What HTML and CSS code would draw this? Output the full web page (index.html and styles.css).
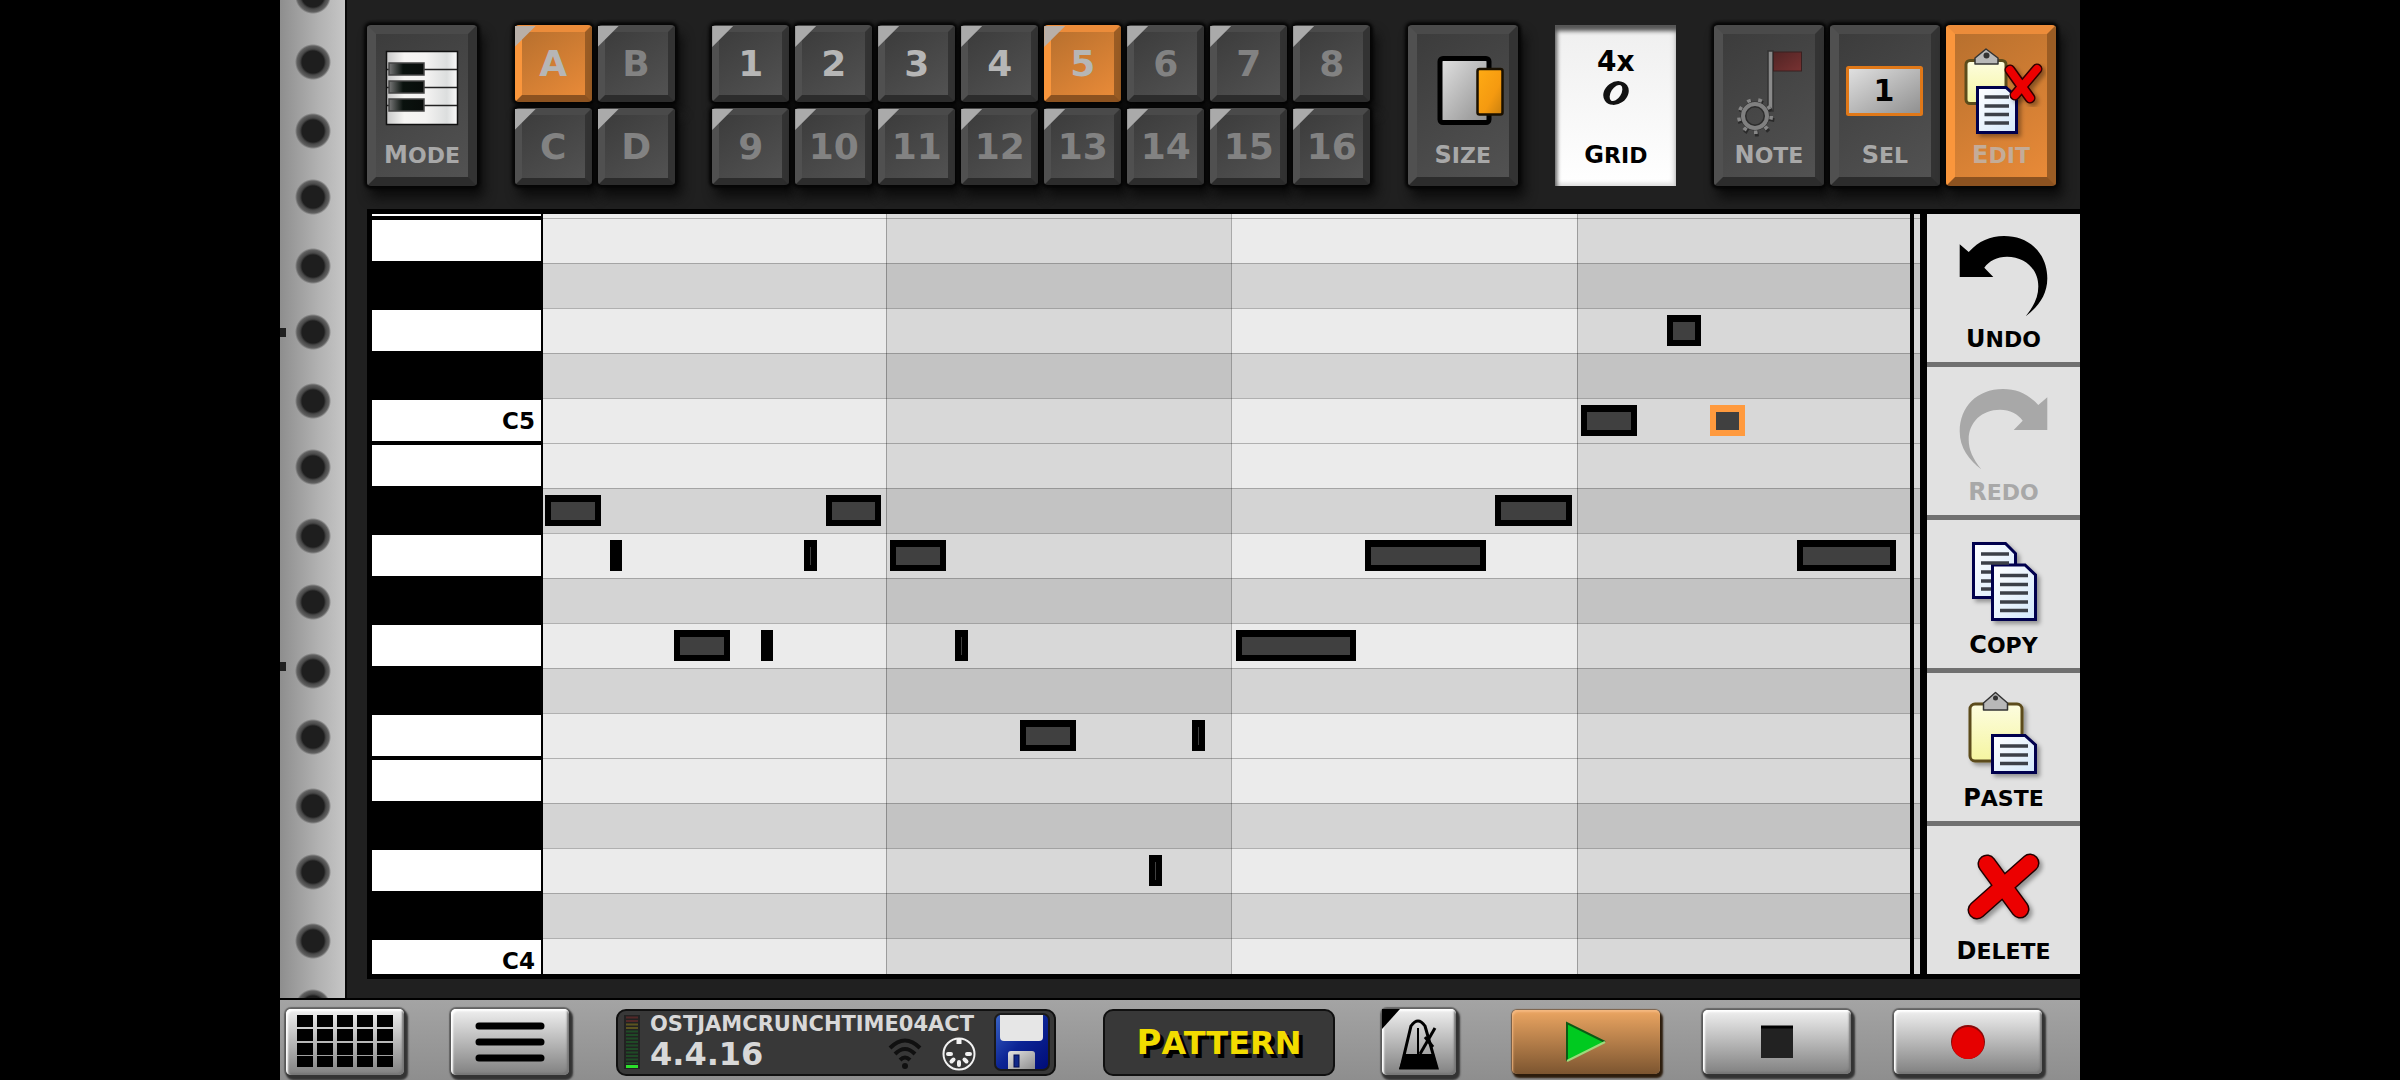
FILE: index.html
```html
<!DOCTYPE html>
<html lang="en">
<head>
<meta charset="utf-8">
<title>Pattern editor</title>
<link rel="stylesheet" href="styles.css">
</head>
<body>
<svg class="defs" aria-hidden="true">
  <defs>
    <linearGradient id="silver" x1="0" y1="0" x2="1" y2="1"><stop offset="0" stop-color="#e2e2e2"/><stop offset="1" stop-color="#8e8e8e"/></linearGradient>
    <linearGradient id="amber" x1="0" y1="0" x2="1" y2="1"><stop offset="0" stop-color="#ffab14"/><stop offset=".6" stop-color="#f59a10"/><stop offset="1" stop-color="#c87f0e"/></linearGradient>
    <linearGradient id="ivory" x1="0" y1="0" x2="1" y2="0"><stop offset="0" stop-color="#c8c8c8"/><stop offset=".25" stop-color="#f6f5f3"/><stop offset=".55" stop-color="#f4f3f2"/><stop offset=".85" stop-color="#dcdede"/><stop offset="1" stop-color="#fafafa"/></linearGradient>
    <linearGradient id="ebony" x1="0" y1="0" x2="1" y2="0"><stop offset="0" stop-color="#777"/><stop offset=".4" stop-color="#0a120e"/><stop offset="1" stop-color="#080c0a"/></linearGradient>
    <linearGradient id="paper" x1="0" y1="0" x2="1" y2="1"><stop offset="0" stop-color="#ffffff"/><stop offset="1" stop-color="#d4e8fb"/></linearGradient>
    <linearGradient id="board" x1="0" y1="0" x2="0" y2="1"><stop offset="0" stop-color="#fdfde0"/><stop offset="1" stop-color="#f5f5a0"/></linearGradient>
    <linearGradient id="blue" x1="0" y1="0" x2="1" y2="1"><stop offset="0" stop-color="#3b66c8"/><stop offset=".5" stop-color="#0c2494"/><stop offset="1" stop-color="#000c78"/></linearGradient>
    <linearGradient id="flag" x1="0" y1="0" x2="1" y2="1"><stop offset="0" stop-color="#502424"/><stop offset="1" stop-color="#783232"/></linearGradient>
    <filter id="drop" x="-20%" y="-20%" width="150%" height="150%"><feDropShadow dx="3" dy="3" stdDeviation="2" flood-opacity=".35"/></filter>
  </defs>
</svg>
<div class="app">
  <div class="upper">
    <div class="spine"></div>
    <div class="workspace">
      <header class="toolbar">
        <button class="tool" type="button">
          <svg viewBox="9 9 92 109" width="92" height="109"><rect x="19.500" y="26.500" width="71" height="73" fill="url(#ivory)" stroke="#111" stroke-width="1.500"/><path d="M20 44.500H90M20 62.500H90M20 80.500H90" stroke="#222" stroke-width="1.500"/><g fill="url(#ebony)" stroke="#444" stroke-width="1.500"><rect x="22" y="38" width="35" height="12"/><rect x="22" y="56" width="35" height="12"/><rect x="22" y="74" width="35" height="12"/></g></svg>
          <span class="cap">Mode</span>
        </button>
        <div class="pads banks">
          <button class="pad on" type="button">A</button><button class="pad" type="button">B</button>
          <button class="pad" type="button">C</button><button class="pad" type="button">D</button>
        </div>
        <div class="pads patterns">
          <button class="pad used" type="button">1</button><button class="pad used" type="button">2</button><button class="pad used" type="button">3</button><button class="pad used" type="button">4</button><button class="pad on" type="button">5</button><button class="pad" type="button">6</button><button class="pad" type="button">7</button><button class="pad" type="button">8</button>
          <button class="pad" type="button">9</button><button class="pad" type="button">10</button><button class="pad" type="button">11</button><button class="pad" type="button">12</button><button class="pad" type="button">13</button><button class="pad" type="button">14</button><button class="pad" type="button">15</button><button class="pad" type="button">16</button>
        </div>
        <button class="tool" type="button">
          <svg viewBox="9 9 92 109" width="92" height="109"><rect x="32" y="33.500" width="49" height="64" rx="3" fill="url(#silver)" stroke="#000" stroke-width="5"/><rect x="69.500" y="44" width="25" height="45.500" rx="2" fill="url(#amber)" stroke="#1a1000" stroke-width="2.500"/></svg>
          <span class="cap">Size</span>
        </button>
        <button class="tool grid-tool" type="button">
          <span class="grid-value">4x</span>
          <svg viewBox="0 0 32 28" width="32" height="28"><ellipse cx="16" cy="14" rx="13.500" ry="11" transform="rotate(-35 16 14)" fill="#111"/><ellipse cx="16" cy="14" rx="9" ry="5" transform="rotate(-58 16 14)" fill="#f6f6f6"/></svg>
          <span class="cap">Grid</span>
        </button>
        <div class="tool-group">
          <button class="tool" type="button">
            <svg viewBox="9 9 92 109" width="92" height="109"><rect x="54" y="26" width="5" height="60" fill="#8a8a8a" stroke="#333" stroke-width="1.500"/><rect x="59.500" y="27" width="28" height="19" fill="url(#flag)" stroke="#3a2020"/><circle cx="41" cy="91" r="15.500" fill="none" stroke="#2a2a2a" stroke-width="6" stroke-dasharray="3.500 7.320" transform="translate(1 2)"/><circle cx="41" cy="91" r="15.500" fill="none" stroke="#868686" stroke-width="5" stroke-dasharray="3.500 7.320"/><circle cx="41" cy="91" r="11.500" fill="none" stroke="#2c2c2c" stroke-width="6"/><circle cx="41" cy="91" r="12" fill="none" stroke="#808080" stroke-width="4"/></svg>
            <span class="cap">Note</span>
          </button>
          <button class="tool" type="button">
            <svg viewBox="9 9 92 109" width="92" height="109"><rect x="17.500" y="42.500" width="74" height="47" rx="1" fill="url(#silver)" stroke="#e07818" stroke-width="3"/><text class="sel-count" x="54" y="76" text-anchor="middle">1</text></svg>
            <span class="cap">Sel</span>
          </button>
          <button class="tool on" type="button">
            <svg viewBox="9 9 92 109" width="92" height="109"><rect x="20" y="35.500" width="40" height="43" rx="4" fill="url(#board)" stroke="#5c4c1c" stroke-width="3"/><path d="M29 39V33L40 24L52 33V39Z" fill="#b8b8b8" stroke="#333" stroke-width="1.500" stroke-linejoin="round"/><circle cx="40.500" cy="30.500" r="3" fill="#333"/><g filter="url(#drop)"><path d="M31.500 62.500H60L70.500 72V107.500H31.500Z" fill="url(#paper)" stroke="#00004e" stroke-width="3"/></g><path d="M38.500 72H63M38.500 81H63M38.500 89.500H63M38.500 98H63" stroke="#3c4048" stroke-width="3.500"/><g filter="url(#drop)" stroke-linecap="round"><path d="M64 45L84 73M91 44L69 70" stroke="#300" stroke-width="11"/><path d="M64 45L84 73M91 44L69 70" stroke="#ec0000" stroke-width="8"/></g></svg>
            <span class="cap">Edit</span>
          </button>
        </div>
      </header>
      <main class="editor">
        <div class="keys">
          <div class="key first"></div>
          <div class="key"></div><div class="key black"></div><div class="key"></div><div class="key black"></div><div class="key">C5</div>
          <div class="key"></div><div class="key black"></div><div class="key"></div><div class="key black"></div><div class="key"></div><div class="key black"></div><div class="key"></div>
          <div class="key"></div><div class="key black"></div><div class="key"></div><div class="key black"></div><div class="key">C4</div>
        </div>
        <div class="roll">
          <div class="lanes">
            <div class="lane first"></div>
            <div class="lane"></div><div class="lane dark"></div><div class="lane"></div><div class="lane dark"></div><div class="lane"></div>
            <div class="lane"></div><div class="lane dark"></div><div class="lane"></div><div class="lane dark"></div><div class="lane"></div><div class="lane dark"></div><div class="lane"></div>
            <div class="lane"></div><div class="lane dark"></div><div class="lane"></div><div class="lane dark"></div><div class="lane"></div>
          </div>
          <div class="measures"><i></i><i></i><i></i><i></i></div>
          <div class="note" style="--step:0;--len:3;--row:6"></div>
          <div class="note" style="--step:3;--len:1;--row:7"></div>
          <div class="note" style="--step:6;--len:3;--row:9"></div>
          <div class="note" style="--step:10;--len:1;--row:9"></div>
          <div class="note" style="--step:12;--len:1;--row:7"></div>
          <div class="note" style="--step:13;--len:3;--row:6"></div>
          <div class="note" style="--step:16;--len:3;--row:7"></div>
          <div class="note" style="--step:19;--len:1;--row:9"></div>
          <div class="note" style="--step:22;--len:3;--row:11"></div>
          <div class="note" style="--step:28;--len:1;--row:14"></div>
          <div class="note" style="--step:30;--len:1;--row:11"></div>
          <div class="note" style="--step:32;--len:6;--row:9"></div>
          <div class="note" style="--step:38;--len:6;--row:7"></div>
          <div class="note" style="--step:44;--len:4;--row:6"></div>
          <div class="note" style="--step:48;--len:3;--row:4"></div>
          <div class="note" style="--step:52;--len:2;--row:2"></div>
          <div class="note selected" style="--step:54;--len:2;--row:4"></div>
          <div class="note" style="--step:58;--len:5;--row:7"></div>
          <div class="end-bar"></div>
        </div>
        <aside class="actions">
          <button class="action" type="button">
            <svg viewBox="0 0 153 113" width="153" height="113"><path d="M32.700 30.300L41.700 38C52 27 63 22 77 22C103 22 120.300 40 120.300 64.500C120.300 81 111 93 98.700 102.300C107 92 111.300 83 111.300 72.500C111.300 55 98 42.700 80 42.700C70 42.700 62 47 57.300 53.700L66.300 63H32.700Z"/></svg>
            <span class="cap">Undo</span>
          </button>
          <button class="action" type="button" disabled>
            <svg viewBox="0 0 153 113" width="153" height="113"><path fill="#a8a8a8" transform="translate(153 0) scale(-1 1)" d="M32.700 30.300L41.700 38C52 27 63 22 77 22C103 22 120.300 40 120.300 64.500C120.300 81 111 93 98.700 102.300C107 92 111.300 83 111.300 72.500C111.300 55 98 42.700 80 42.700C70 42.700 62 47 57.300 53.700L66.300 63H32.700Z"/></svg>
            <span class="cap">Redo</span>
          </button>
          <button class="action" type="button">
            <svg viewBox="0 0 153 113" width="153" height="113"><g fill="url(#paper)" stroke="#00004e" stroke-width="3" filter="url(#drop)"><path d="M46.500 23.500H78.500L88.500 33.500V77.500H46.500Z"/><path d="M65.500 45H98L108.500 55V99.500H65.500Z"/></g><path d="M54 34H82M54 43H82M54 52H64M54 61H64M54 69H64M73 55.500H101M73 64.500H101M73 73H101M73 82H101M73 90.500H101" stroke="#3c4048" stroke-width="3.500"/></svg>
            <span class="cap">Copy</span>
          </button>
          <button class="action" type="button">
            <svg viewBox="0 0 153 113" width="153" height="113"><rect x="43" y="31" width="52" height="57" rx="5" fill="url(#board)" stroke="#5c4c1c" stroke-width="3" filter="url(#drop)"/><path d="M56.500 37V30L68.500 19.500L80.500 30V37Z" fill="#b8b8b8" stroke="#333" stroke-width="1.500" stroke-linejoin="round"/><circle cx="68.500" cy="25" r="2.500" fill="#333"/><path d="M65.500 62.500H98L108.500 72V99.500H65.500Z" fill="url(#paper)" stroke="#00004e" stroke-width="3" filter="url(#drop)"/><path d="M73 73H101M73 82H101M73 90.500H101" stroke="#3c4048" stroke-width="3.500"/></svg>
            <span class="cap">Paste</span>
          </button>
          <button class="action" type="button">
            <svg viewBox="0 0 153 113" width="153" height="113"><g stroke-linecap="round" filter="url(#drop)"><path d="M60 38L93 83M103 37L50 84" stroke="#200" stroke-width="19"/><path d="M60 38L93 83M103 37L50 84" stroke="#ec0000" stroke-width="16"/></g></svg>
            <span class="cap">Delete</span>
          </button>
        </aside>
      </main>
    </div>
  </div>
  <footer class="transport">
    <button class="chrome" type="button" aria-label="Grid view">
      <svg viewBox="0 0 96 60" width="96" height="60"><path d="M0 0H16V12H0ZM20 0H36V12H20ZM40 0H56V12H40ZM60 0H76V12H60ZM80 0H96V12H80ZM0 14H16V26H0ZM20 14H36V26H20ZM40 14H56V26H40ZM60 14H76V26H60ZM80 14H96V26H80ZM0 28H16V40H0ZM20 28H36V40H20ZM40 28H56V40H40ZM60 28H76V40H60ZM80 28H96V40H80ZM0 41H16V52H0ZM20 41H36V52H20ZM40 41H56V52H40ZM60 41H76V52H60ZM80 41H96V52H80Z" transform="translate(0 3)"/></svg>
    </button>
    <button class="chrome" type="button" aria-label="Menu">
      <svg viewBox="0 0 70 44" width="70" height="44"><path d="M4 6H66M4 22H66M4 38H66" stroke="#000" stroke-width="7" stroke-linecap="round"/></svg>
    </button>
    <div class="display">
      <svg viewBox="0 0 16 54" width="16" height="54"><rect width="16" height="54" fill="#222"/><path d="M2 2.500H14M2 6H14" stroke="#532828" stroke-width="2"/><path d="M2 9.500H14M2 13H14" stroke="#5c5420" stroke-width="2"/><path d="M2 16.500H14M2 20H14M2 23.500H14M2 27H14M2 30.500H14M2 34H14M2 37.500H14M2 41H14M2 44.500H14M2 48H14" stroke="#1f4a26" stroke-width="2"/><path d="M2 51.500H14" stroke="#2ce02c" stroke-width="3"/></svg>
      <div class="song">
        <div class="song-name">OSTJamCrunchtime04Act</div>
        <div class="song-row">
          <span class="position">4.4.16</span>
          <svg viewBox="0 0 34 34" width="34" height="34" fill="none" stroke="#101010" stroke-width="4"><path d="M2 11Q17 -4 32 11M7 17Q17 7 27 17M12 23Q17 18 22 23"/><circle cx="17" cy="29" r="3" fill="#101010" stroke="none"/></svg>
          <svg viewBox="0 0 34 34" width="34" height="34"><circle cx="17" cy="17" r="15.500" fill="none" stroke="#f2f2f2" stroke-width="2"/><path d="M17 2V7" stroke="#f2f2f2" stroke-width="5"/><g stroke="#f2f2f2" stroke-width="4" stroke-linecap="round"><path d="M6 17H9M25 17H28M9.500 24.500L11.500 22.500M24.500 24.500L22.500 22.500M17 25V28"/></g></svg>
        </div>
      </div>
      <button class="save" type="button" aria-label="Save">
        <svg viewBox="0 0 56 58" width="56" height="58"><rect x="1" y="1" width="54" height="56" rx="6" fill="url(#blue)" stroke="#1a1a1a" stroke-width="2"/><path d="M6 2H49V24Q49 28 45 28H10Q6 28 6 24Z" fill="#e6e6e6"/><path d="M14 56V41Q14 38 17 38H38Q41 38 41 41V56Z" fill="url(#silver)"/><rect x="20" y="42" width="5" height="12" fill="#102888" stroke="#000a50"/></svg>
      </button>
    </div>
    <button class="mode-name" type="button"><span class="mode-text">Pattern</span></button>
    <button class="chrome metronome" type="button" aria-label="Metronome">
      <svg viewBox="0 0 44 60" width="44" height="60" fill="none" stroke="#000" stroke-width="3"><path d="M4 56L14 14Q21 4 28 14L40 56Z"/><path d="M7 42H37L41 57H2Z" fill="#000" stroke="none"/><path d="M21 16V42" stroke-width="2"/><path d="M23 42L38 16"/><path d="M28 25L36 35"/></svg>
    </button>
    <div class="transport-keys">
      <button class="chrome wide play" type="button" aria-label="Play">
        <svg viewBox="0 0 44 42" width="44" height="42"><path d="M3 2L41 21L3 40Z" fill="#00ca20"/><path d="M3 40V2L41 21" fill="none" stroke="#0a5a14" stroke-width="2"/><path d="M3 40L41 21" stroke="#9ed87c" stroke-width="2"/></svg>
      </button>
      <button class="chrome wide" type="button" aria-label="Stop">
        <svg viewBox="0 0 34 34" width="34" height="34"><rect x="1" y="1" width="32" height="32" fill="#222"/><path d="M1 2H33" stroke="#000" stroke-width="3"/></svg>
      </button>
      <button class="chrome wide" type="button" aria-label="Record">
        <svg viewBox="0 0 36 36" width="36" height="36"><circle cx="18" cy="18" r="17" fill="#8c0808"/><circle cx="18" cy="19" r="16" fill="#e60000"/></svg>
      </button>
    </div>
  </footer>
</div>
</body>
</html>
```
FILE: styles.css
```css
* { box-sizing: border-box; }
body {
  margin: 0;
  background: #000;
  color: #000;
  font-family: "DejaVu Sans", "Liberation Sans", sans-serif;
  font-weight: 700;
}
button {
  margin: 0;
  padding: 0;
  border: 0;
  background: none;
  color: inherit;
  font: inherit;
}
svg { display: block; flex: none; }
.defs { position: absolute; width: 0; height: 0; }

.app {
  display: flex;
  flex-direction: column;
  min-height: 100vh;
  margin: 0 320px 0 280px;
  background: #202020;
}
.upper { display: flex; flex: 1; }
.spine {
  flex: none;
  width: 67px;
  border-right: 2px solid #080808;
  background:
    linear-gradient(#202020, #202020) 0 328px / 6px 9px no-repeat,
    linear-gradient(#202020, #202020) 0 662px / 6px 9px no-repeat,
    radial-gradient(circle at 33px 32px, #1e1e1e 11px, #484848 13px, #606060 16px, transparent 18px) 0 30px / 65px 135px repeat-y,
    radial-gradient(circle at 33px 101px, #1e1e1e 11px, #484848 13px, #606060 16px, transparent 18px) 0 30px / 65px 135px repeat-y,
    linear-gradient(90deg, #8e8e8e, #b2b2b2 60%, #c6c6c6);
}
.workspace { display: flex; flex: 1; flex-direction: column; min-width: 0; padding-bottom: 19px; }

/* Toolbar */
.toolbar {
  display: flex;
  justify-content: space-between;
  align-items: flex-start;
  height: 209px;
  padding: 25px 24px 0 20px;
}
.tool, .pad {
  position: relative;
  border: 9px solid;
  border-color: #4a4a4a #333 #2c2c2c #505050;
  border-radius: 4px;
  background: linear-gradient(145deg, #3c3c3c, #525252) padding-box, #3c3c3c;
  box-shadow: 0 0 3px 3px #060606, 5px 10px 12px 2px #0c0c0c;
}
.tool {
  display: flex;
  flex-direction: column;
  align-items: center;
  width: 110px;
  height: 161px;
  color: #a8a8a8;
}
.tool-group { display: flex; gap: 6px; }
.tool.on, .pad.on {
  border-color: #ec8c3a #9a5c24 #8c5220 #fa963c;
  background: linear-gradient(145deg, #b8702e, #e88a38) padding-box, #c87830;
}
.tool.on { color: #c4ac98; }
.tool.grid-tool {
  width: 121px;
  padding-top: 20px;
  border: 0;
  border-radius: 0;
  background: linear-gradient(#efefef, #fff);
  box-shadow: inset 2px 6px 4px #555, inset -3px -3px 4px #ddd;
  color: #000;
}
.grid-value { font-size: 28px; line-height: 34px; }
.grid-tool svg { margin-bottom: 36px; }
.cap {
  display: block;
  font-size: 22px;
  line-height: 24px;
  text-transform: uppercase;
}
.cap::first-letter { font-size: 24px; }
.sel-count { font-size: 30px; }

.pads { display: grid; gap: 6px; }
.banks { grid-template-columns: repeat(2, 77px); }
.patterns { grid-template-columns: repeat(8, 77px); }
.pad {
  height: 77px;
  border-width: 7px;
  color: #828282;
  font-size: 36px;
  line-height: 60px;
}
.pad.used, .pad.on { color: #b6b6b6; }
.pad::before {
  content: "";
  position: absolute;
  top: -6px;
  left: -7px;
  width: 21px;
  height: 21px;
  background: #aaa;
  clip-path: polygon(0 0, 100% 0, 0 100%);
}
.pad.on::before { background: #b8afa8; }

/* Piano roll */
.editor {
  display: flex;
  flex: 1;
  margin-left: 20px;
  border: solid #000;
  border-width: 5px 0 5px 5px;
  background: #000;
}
.keys { flex: none; width: 171px; height: 760px; overflow: hidden; padding-right: 2px; }
.key {
  height: 45px;
  padding-right: 6px;
  border: solid #000;
  border-width: 2px 0;
  background: #fff;
  font-size: 23px;
  line-height: 43px;
  text-align: right;
}
.key.first { height: 4px; border-top: 0; }
.key.black { background: #000; }
.roll { position: relative; flex: 1; height: 760px; overflow: hidden; }
.lane { height: 45px; border-top: 1px solid #b0b0b0; background: #ebebeb; }
.lane.first { height: 4px; border: 0; }
.lane.dark { border-color: #a4a4a4; background: #d4d4d4; }
.measures {
  position: absolute;
  inset: 0;
  display: grid;
  grid-template-columns: 343fr 345fr 346fr 343fr;
}
.measures i { border-left: 1px solid rgba(0, 0, 0, .28); }
.measures i:first-child { border: 0; }
.measures i:nth-child(even) { background: rgba(0, 0, 0, .077); }
.note {
  --unit: calc(100% / 63.8);
  position: absolute;
  top: calc(var(--row) * 45px + 11px);
  left: calc(2px + var(--step) * var(--unit));
  width: calc(var(--len) * var(--unit) - 9px);
  height: 31px;
  border: 6px solid #000;
  border-top-width: 7px;
  background: #404040;
}
.note.selected { border-color: #ff9a3e; }
.end-bar { position: absolute; top: 0; right: 6px; bottom: 0; width: 4px; background: #000; }

.actions {
  display: grid;
  flex: none;
  grid-template-rows: repeat(5, 1fr);
  gap: 5px;
  width: 153px;
  margin-left: 7px;
  background: #707070;
}
.action {
  display: flex;
  flex-direction: column;
  align-items: center;
  background: #e1e1e1;
}
.action:disabled { color: #a8a8a8; }

/* Transport bar */
.transport {
  display: flex;
  align-items: center;
  gap: 47px;
  height: 82px;
  padding: 4px 38px 0 6px;
  border-top: 2px solid #000;
  background: linear-gradient(#a4a4a4, #8e8e8e);
}
.chrome {
  position: relative;
  display: flex;
  flex: none;
  align-items: center;
  justify-content: center;
  width: 118px;
  height: 66px;
  border-radius: 5px;
  background: linear-gradient(#f0f0f0, #808080);
  box-shadow: inset 2px 2px 2px #fff, inset -2px -2px 2px #777, 2px 3px 2px 2px #333, 0 0 1px 2px #666;
}
.display, .mode-name {
  height: 67px;
  border: 2px solid #101010;
  border-radius: 10px;
  background: #383838;
}
.display {
  display: flex;
  flex: none;
  align-items: center;
  width: 440px;
  padding: 0 4px 0 6px;
}
.song { flex: 1; min-width: 0; margin-left: 10px; color: #d8d8d8; }
.song-name { font-size: 21px; line-height: 24px; text-transform: uppercase; }
.song-row { display: flex; align-items: center; gap: 20px; height: 36px; padding-right: 18px; }
.position { flex: 1; font-size: 32px; line-height: 36px; }
.mode-name { flex: none; width: 232px; color: #f2dc00; }
.mode-text {
  display: block;
  font-size: 32px;
  line-height: 62px;
  text-shadow: 4px 4px 0 #000;
  text-transform: uppercase;
}
.mode-text::first-letter { font-size: 34px; }
.metronome { width: 74px; }
.metronome::before {
  content: "";
  position: absolute;
  top: 0;
  left: 0;
  width: 18px;
  height: 20px;
  background: #000;
  clip-path: polygon(0 0, 100% 0, 0 100%);
}
.transport-keys { display: flex; gap: 43px; margin-left: auto; }
.wide { width: 148px; height: 64px; }
.play {
  background: linear-gradient(#eca662, #7c5530);
  box-shadow: inset 1px 2px 2px #f4b880, 2px 3px 2px 1px #2c1c0c, 0 0 1px 1px #7a6048;
}
```
